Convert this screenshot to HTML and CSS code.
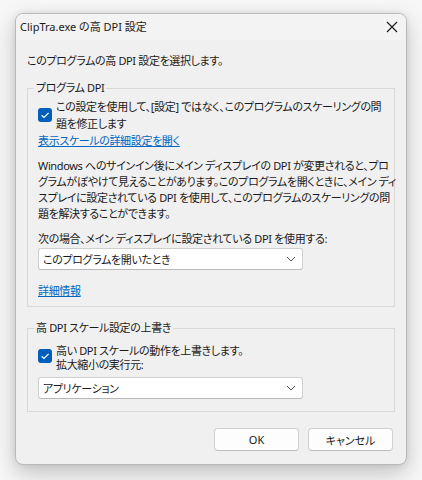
FILE: index.html
```html
<!DOCTYPE html>
<html lang="ja">
<head>
<meta charset="utf-8">
<link rel="stylesheet" href="styles.css">
</head>
<body>
<div class="window">
  <div class="titlebar">
    <span class="title">ClipTra.exe の高 DPI 設定</span>
    <span class="close">
      <svg width="12" height="12" viewBox="0 0 12 12"><path d="M1 1 L11 11 M11 1 L1 11" stroke="#1a1a1a" stroke-width="1.1" fill="none"/></svg>
    </span>
  </div>
  <div class="content">
    <p class="intro">このプログラムの高 DPI 設定を選択します。</p>

    <fieldset class="group group1">
      <legend>プログラム DPI</legend>
      <div class="check-row">
        <span class="checkbox"><svg width="14" height="14" viewBox="0 0 14 14"><path d="M3.6 7.2 L6 9.4 L10.6 4.8" stroke="#fff" stroke-width="1.2" fill="none"/></svg></span>
        <span class="check-text">この設定を使用して、[設定] ではなく、このプログラムのスケーリングの問<br>題を修正します</span>
      </div>
      <a class="link">表示スケールの詳細設定を開く</a>
      <p class="para">Windows へのサインイン後にメイン ディスプレイの DPI が変更されると、プロ<br>グラムがぼやけて見えることがあります。このプログラムを開くときに、メイン ディ<br>スプレイに設定されている DPI を使用して、このプログラムのスケーリングの問<br>題を解決することができます。</p>
      <p class="label">次の場合、メイン ディスプレイに設定されている DPI を使用する:</p>
      <div class="combo">
        <span>このプログラムを開いたとき</span>
        <svg width="10" height="6" viewBox="0 0 10 6"><path d="M1 1 L5 5 L9 1" stroke="#555" stroke-width="1" fill="none"/></svg>
      </div>
      <a class="link link-more">詳細情報</a>
    </fieldset>

    <fieldset class="group group2">
      <legend>高 DPI スケール設定の上書き</legend>
      <div class="check-row check-row2">
        <span class="checkbox checkbox2"><svg width="14" height="14" viewBox="0 0 14 14"><path d="M3.6 7.2 L6 9.4 L10.6 4.8" stroke="#fff" stroke-width="1.2" fill="none"/></svg></span>
        <div class="check-col">
          <span class="check-line">高い DPI スケールの動作を上書きします。</span>
          <span class="check-line">拡大縮小の実行元:</span>
        </div>
      </div>
      <div class="combo combo2">
        <span>アプリケーション</span>
        <svg width="10" height="6" viewBox="0 0 10 6"><path d="M1 1 L5 5 L9 1" stroke="#555" stroke-width="1" fill="none"/></svg>
      </div>
    </fieldset>

    <div class="buttons">
      <button class="btn">OK</button>
      <button class="btn">キャンセル</button>
    </div>
  </div>
</div>
</body>
</html>
```
FILE: styles.css
```css
html, body {
  margin: 0;
  padding: 0;
}
body {
  background: #f7f7f7;
  padding: 13px 0 0 15px;
  font-family: "Noto Sans", "Noto Sans CJK JP", sans-serif;
  font-feature-settings: "palt";
  font-size: 11px;
  letter-spacing: -0.35px;
  color: #1a1a1a;
  height: 480px;
  box-sizing: border-box;
}
.window {
  width: 392px;
  height: 452px;
  box-sizing: border-box;
  border: 1px solid #b9b9b9;
  border-radius: 8px;
  background: #f0f0f0;
  box-shadow: 0 8px 22px rgba(0,0,0,0.22), 0 0 6px rgba(0,0,0,0.08);
  overflow: hidden;
  display: flex;
  flex-direction: column;
}
.titlebar {
  height: 26px;
  background: #f3f3f3;
  display: flex;
  align-items: center;
  justify-content: space-between;
  padding: 0 8px 0 4px;
  flex-shrink: 0;
}
.title {
  line-height: 16px;
  white-space: nowrap;
  letter-spacing: 0;
  font-size: 11px;
}
.close {
  display: flex;
  width: 12px;
  height: 12px;
}
.content {
  padding: 0 11px;
  display: flex;
  flex-direction: column;
}
.intro {
  margin: 13px 0 0 0;
  line-height: 16px;
  white-space: nowrap;
}
.group {
  margin: 0;
  border: 1px solid #d9d9d9;
  padding: 0 10px;
  min-width: 0;
  display: flex;
  flex-direction: column;
}
.group legend {
  padding: 0 2px;
  margin-left: -4px;
  line-height: 16px;
  white-space: nowrap;
}
.group1 {
  margin-top: 11px;
  padding-bottom: 7px;
}
.group2 {
  margin-top: 13px;
  padding-bottom: 12px;
}
.check-row {
  display: flex;
  align-items: center;
  gap: 4px;
  margin-top: 2px;
}
.check-row2 {
  margin-top: 8px;
}
.checkbox {
  width: 14px;
  height: 14px;
  border-radius: 3px;
  background: #005fb8;
  display: flex;
  flex-shrink: 0;
}
.checkbox2 {
  margin-bottom: 4px;
}
.check-text {
  line-height: 17px;
  white-space: nowrap;
}
.check-col {
  display: flex;
  flex-direction: column;
}
.check-line {
  line-height: 14px;
  white-space: nowrap;
}
.link {
  color: #0067c0;
  text-decoration: underline;
  line-height: 17px;
  align-self: flex-start;
  white-space: nowrap;
}
.para {
  margin: 9px 0 0 0;
  line-height: 16px;
  white-space: nowrap;
}
.label {
  margin: 9px 0 0 0;
  line-height: 16px;
  white-space: nowrap;
}
.combo {
  width: 265px;
  height: 22px;
  box-sizing: border-box;
  margin-top: 1px;
  background: #fff;
  border: 1px solid #cfcfcf;
  border-bottom-color: #b8b8b8;
  border-radius: 3px;
  display: flex;
  align-items: center;
  justify-content: space-between;
  padding: 0 6px 0 4px;
}
.combo2 {
  margin-top: 5px;
}
.link-more {
  margin-top: 12px;
}
.buttons {
  display: flex;
  justify-content: flex-end;
  gap: 9px;
  margin-top: 16px;
  padding-right: 2px;
}
.btn {
  width: 85px;
  height: 23px;
  font: inherit;
  letter-spacing: 0;
  color: #1a1a1a;
  background: #fdfdfd;
  border: 1px solid #d0d0d0;
  border-bottom-color: #bdbdbd;
  border-radius: 4px;
  padding: 0;
}
```
